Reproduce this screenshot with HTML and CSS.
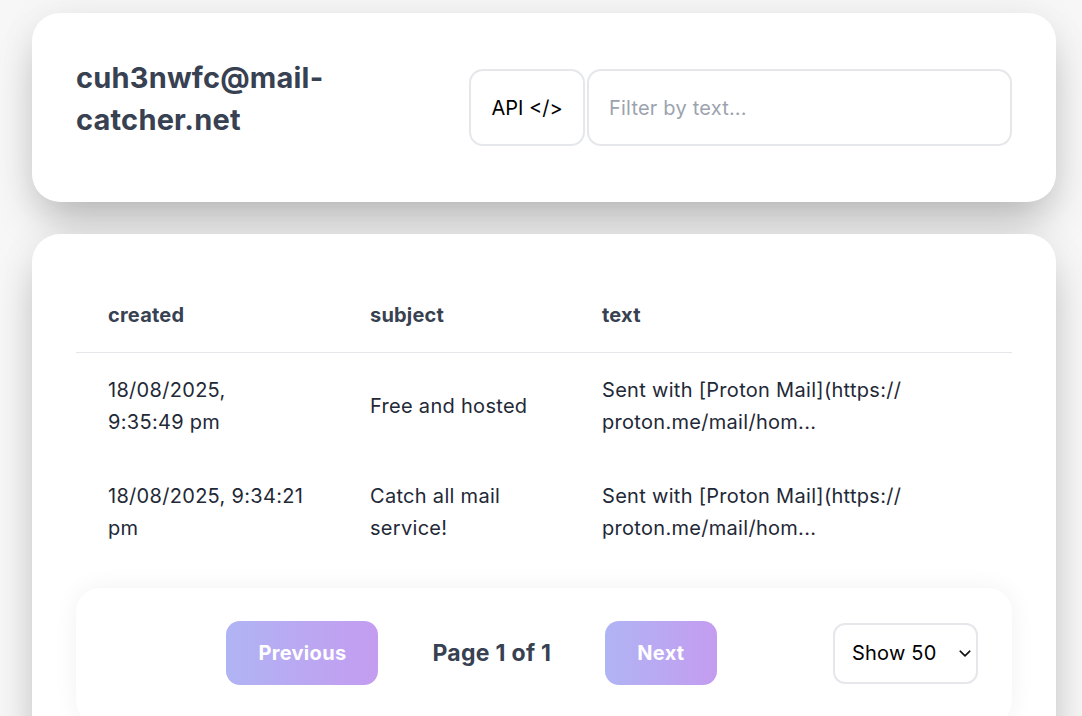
FILE: index.html
```html
<!DOCTYPE html>
<html lang="en">
<head>
<meta charset="utf-8">
<title>Mail Catcher</title>
<link rel="stylesheet" href="styles.css">
</head>
<body>
<main class="page">
  <section class="card header-card">
    <h1 class="address">cuh3nwfc@mail-catcher.net</h1>
    <div class="controls">
      <button class="api-btn">API &lt;/&gt;</button>
      <input class="filter" type="text" placeholder="Filter by text...">
    </div>
  </section>

  <section class="card list-card">
    <table class="mail-table">
      <colgroup>
        <col class="col-created">
        <col class="col-subject">
        <col class="col-text">
      </colgroup>
      <thead>
        <tr>
          <th>created</th>
          <th>subject</th>
          <th>text</th>
        </tr>
      </thead>
      <tbody>
        <tr>
          <td>18/08/2025, 9:35:49 pm</td>
          <td>Free and hosted</td>
          <td>Sent with [Proton Mail](https://<wbr>proton.me/mail/hom...</td>
        </tr>
        <tr>
          <td>18/08/2025, 9:34:21 pm</td>
          <td>Catch all mail service!</td>
          <td>Sent with [Proton Mail](https://<wbr>proton.me/mail/hom...</td>
        </tr>
      </tbody>
    </table>

    <div class="pager">
      <div class="pager-nav">
        <button class="pager-btn" disabled>Previous</button>
        <span class="pager-info">Page 1 of 1</span>
        <button class="pager-btn" disabled>Next</button>
      </div>
      <div class="select-wrap">
        <select class="page-size">
          <option>Show 50</option>
          <option>Show 100</option>
        </select>
        <svg class="chev" width="12" height="7" viewBox="0 0 12 7" aria-hidden="true"><path d="M1.2 1.2 6 5.8l4.8-4.6" fill="none" stroke="#111" stroke-width="1.6" stroke-linecap="round" stroke-linejoin="round"/></svg>
      </div>
    </div>
  </section>
</main>
</body>
</html>
```

FILE: styles.css
```css
* { box-sizing: border-box; }

html, body {
  margin: 0;
  padding: 0;
  background: #f7f7f7;
  font-family: "Inter", "Noto Sans", sans-serif;
  color: #1f2937;
  overflow: hidden;
}

.page {
  display: flex;
  flex-direction: column;
  gap: 32px;
  padding: 13px 26px 0 32px;
}

.card {
  background: #ffffff;
  border-radius: 28px;
  box-shadow: 0 24px 44px -8px rgba(0, 0, 0, 0.26), 0 0 40px rgba(0, 0, 0, 0.05);
}

.header-card {
  display: flex;
  align-items: flex-start;
  gap: 20px;
  padding: 44px 44px;
}

.address {
  flex: 1;
  margin: 0;
  font-size: 29px;
  line-height: 42px;
  font-weight: 700;
  letter-spacing: 0.2px;
  color: #374151;
}

.controls {
  flex: none;
  display: flex;
  gap: 2px;
  width: 543px;
  margin: 12px 0;
}

.api-btn {
  flex: none;
  width: 116px;
  height: 77px;
  background: #fff;
  border: 2px solid #e5e7eb;
  border-radius: 14px;
  font-family: "Inter", sans-serif;
  font-size: 20px;
  color: #000;
}

.filter {
  flex: 1;
  height: 77px;
  border: 2px solid #e5e7eb;
  border-radius: 14px;
  padding: 0 20px;
  font-family: "Inter", sans-serif;
  font-size: 20px;
  letter-spacing: 0.2px;
  color: #111827;
  outline: none;
}

.filter::placeholder { color: #9ca3af; }

.list-card {
  padding: 44px 44px 0 44px;
  min-height: 520px;
}

.mail-table {
  width: 936px;
  border-collapse: collapse;
  table-layout: fixed;
}

.col-created { width: 262px; }
.col-subject { width: 232px; }
.col-text { width: 442px; }

.mail-table th {
  text-align: left;
  font-size: 20px;
  font-weight: 700;
  letter-spacing: 0.2px;
  line-height: 26px;
  color: #374151;
  padding: 24px 30px 24px 32px;
  border-bottom: 1px solid #e5e7eb;
}

.mail-table td {
  font-size: 20px;
  line-height: 32px;
  letter-spacing: 0.3px;
  padding: 21px 33px 21px 32px;
  vertical-align: middle;
  color: #1f2937;
}

.pager {
  margin-top: 23px;
  display: flex;
  align-items: center;
  padding: 33px 34px 40px 34px;
  border-radius: 24px;
  background: #fff;
  box-shadow: 0 0 24px rgba(0, 0, 0, 0.06);
}

.pager-nav {
  flex: 1;
  display: flex;
  align-items: center;
  justify-content: center;
  gap: 54px;
}

.pager-btn {
  height: 64px;
  padding: 0 32px;
  border: none;
  border-radius: 14px;
  background: linear-gradient(90deg, #b0b4f4, #c49cf0);
  color: #ffffff;
  font-family: "Inter", sans-serif;
  font-size: 20px;
  font-weight: 700;
  letter-spacing: 0.3px;
}

.pager-info {
  font-size: 23px;
  font-weight: 700;
  letter-spacing: 0.3px;
  color: #374151;
}

.select-wrap {
  position: relative;
  flex: none;
}

.page-size {
  appearance: none;
  -webkit-appearance: none;
  width: 145px;
  height: 61px;
  padding: 0 0 0 17px;
  border: 2px solid #e5e7eb;
  border-radius: 12px;
  background: #fff;
  font-family: "Inter", sans-serif;
  font-size: 20px;
  letter-spacing: 0.2px;
  color: #000;
}

.chev {
  position: absolute;
  right: 7px;
  top: 27px;
  pointer-events: none;
}
```
